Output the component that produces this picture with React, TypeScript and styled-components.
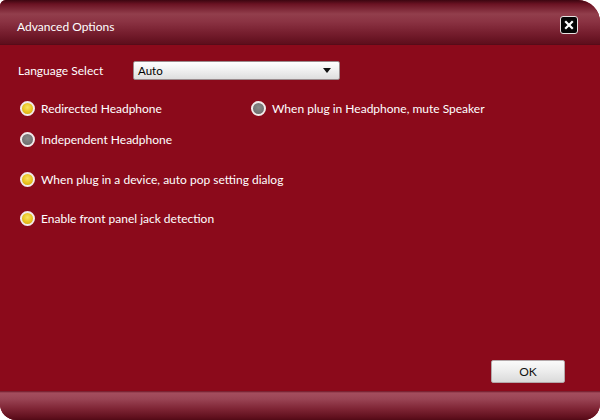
import React, {FunctionComponent} from "react";
import styled, {createGlobalStyle} from "styled-components";

const GlobalStyle = createGlobalStyle`
  html, body {
    margin: 0;
    padding: 0;
    background: #ffffff;
  }
  body {
    font-family: "Segoe UI", Lato, "Noto Sans", sans-serif;
  }
`;

const Window = styled.div`
  width: 600px;
  height: 420px;
  display: flex;
  flex-direction: column;
  background: #8b0a1b;
  border-radius: 6px 22px 16px 16px;
  overflow: hidden;
`;

const TitleBar = styled.div`
  height: 45px;
  flex-shrink: 0;
  display: flex;
  align-items: center;
  justify-content: space-between;
  padding: 0 22px 0 17px;
  box-sizing: border-box;
  background: linear-gradient(to bottom, #3c0610 0px, #6a1222 4px, #923e4c 14px, #8a3242 22px, #741c2c 34px, #5e0e1c 44px, #500a16 45px);
`;

const Title = styled.span`
  color: #ffffff;
  font-size: 12px;
  margin-top: 8px;
`;

const CloseButton = styled.button`
  width: 18px;
  height: 18px;
  padding: 0;
  margin-top: 5px;
  display: flex;
  align-items: center;
  justify-content: center;
  background: #050505;
  border: 1px solid #e8e0e0;
  border-radius: 3px;
`;

const Body = styled.div`
  flex: 1;
  display: flex;
  flex-direction: column;
  padding: 16px 18px 8px 18px;
`;

const LanguageRow = styled.div`
  display: flex;
  align-items: center;
  height: 19px;
`;

const Label = styled.span`
  color: #ffffff;
  font-size: 12px;
  width: 115px;
`;

const Select = styled.div`
  width: 207px;
  height: 19px;
  box-sizing: border-box;
  display: flex;
  align-items: center;
  justify-content: space-between;
  padding: 0 8px 0 4px;
  background: linear-gradient(to bottom, #ffffff, #ececec 60%, #dedede);
  border: 1px solid #9a8a8c;
  border-radius: 2px;
  font-size: 11.5px;
  color: #000000;
`;

const Arrow = styled.span`
  width: 0;
  height: 0;
  border-left: 4px solid transparent;
  border-right: 4px solid transparent;
  border-top: 5px solid #111111;
`;

const OptionRow = styled.div<{ $gap: number }>`
  display: flex;
  height: 20px;
  margin-top: ${p => p.$gap}px;
  padding-left: 2px;
`;

const Option = styled.label<{ $width?: number }>`
  display: flex;
  align-items: center;
  gap: 6px;
  width: ${p => (p.$width ? `${p.$width}px` : "auto")};
  color: #ffffff;
  font-size: 12px;
`;

const Dot = styled.span<{ $on: boolean }>`
  width: 15px;
  height: 15px;
  box-sizing: border-box;
  border-radius: 50%;
  border: 2px solid #f2eaea;
  background: ${p => (p.$on
    ? "radial-gradient(circle at 50% 40%, #fbe462 0%, #e8c21e 55%, #c89a10 100%)"
    : "radial-gradient(circle at 50% 40%, #8a8a8a 0%, #747474 60%, #606060 100%)")};
  flex-shrink: 0;
`;

const Footer = styled.div`
  margin-top: auto;
  display: flex;
  justify-content: flex-end;
  padding-right: 17px;
`;

const OkButton = styled.button`
  width: 74px;
  height: 23px;
  background: linear-gradient(to bottom, #fafafa, #ececec 50%, #dadada);
  border: 1px solid #b4a8aa;
  border-radius: 2px;
  font-family: "Segoe UI", Lato, "Noto Sans", sans-serif;
  font-size: 12px;
  color: #111111;
`;

const BottomBar = styled.div`
  height: 29px;
  flex-shrink: 0;
  background: linear-gradient(to bottom, #6e1626 0px, #a44e5e 2px, #9a4454 8px, #7e2434 18px, #62101e 26px, #520a16 29px);
`;

interface RadioProps {
    on: boolean;
    text: string;
    width?: number;
}

const Radio: FunctionComponent<RadioProps> = ({on, text, width}) => {
    return <Option $width={width}>
        <Dot $on={on}/>
        {text}
    </Option>;
}

const App: FunctionComponent = () => {
    return <>
        <GlobalStyle/>
        <Window>
            <TitleBar>
                <Title>Advanced Options</Title>
                <CloseButton>
                    <svg width="10" height="10" viewBox="0 0 10 10">
                        <path d="M2 2 L8 8 M8 2 L2 8" stroke="#ffffff" strokeWidth="2.2" strokeLinecap="square"/>
                    </svg>
                </CloseButton>
            </TitleBar>
            <Body>
                <LanguageRow>
                    <Label>Language Select</Label>
                    <Select>
                        <span>Auto</span>
                        <Arrow/>
                    </Select>
                </LanguageRow>
                <OptionRow $gap={18}>
                    <Radio on={true} text="Redirected Headphone" width={231}/>
                    <Radio on={false} text="When plug in Headphone, mute Speaker"/>
                </OptionRow>
                <OptionRow $gap={11}>
                    <Radio on={false} text="Independent Headphone"/>
                </OptionRow>
                <OptionRow $gap={20}>
                    <Radio on={true} text="When plug in a device, auto pop setting dialog"/>
                </OptionRow>
                <OptionRow $gap={19}>
                    <Radio on={true} text="Enable front panel jack detection"/>
                </OptionRow>
                <Footer>
                    <OkButton>OK</OkButton>
                </Footer>
            </Body>
            <BottomBar/>
        </Window>
    </>;
}

export default App;
